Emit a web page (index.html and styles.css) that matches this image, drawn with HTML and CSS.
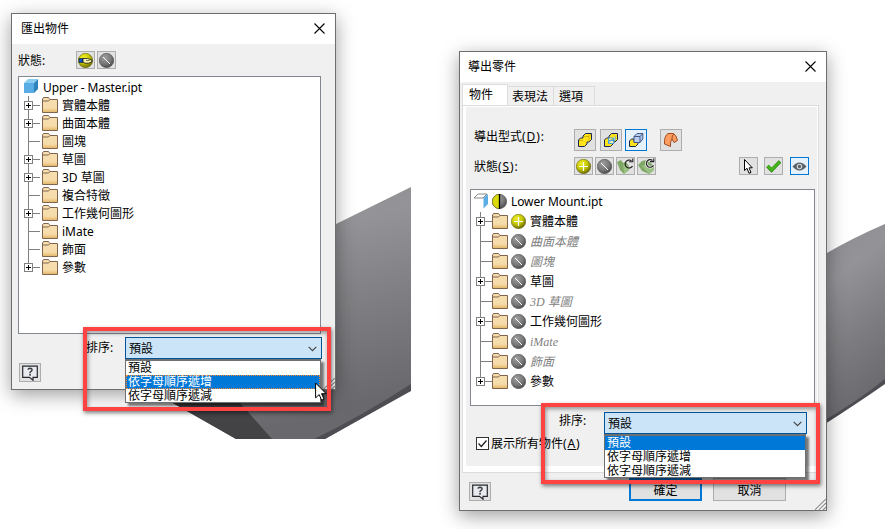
FILE: index.html
```html
<!DOCTYPE html>
<html lang="zh-Hant">
<head>
  <meta charset="UTF-8" />
  <meta name="viewport" content="width=device-width, initial-scale=1" />
  <title>匯出物件 / 導出零件</title>
  <link rel="stylesheet" href="styles.css">
</head>
<body>

  <!-- shared icons -->
  <svg class="defs" width="0" height="0">
    <defs>
      <linearGradient id="gFolder" x1="0" y1="0" x2="0" y2="1">
        <stop offset="0" stop-color="#f5deb0" /><stop offset=".7" stop-color="#f7dcab" /><stop offset="1" stop-color="#e2b366" />
      </linearGradient>
      <radialGradient id="gYellow" cx=".38" cy=".3" r=".75">
        <stop offset="0" stop-color="#eeee30" /><stop offset=".5" stop-color="#c9c900" /><stop offset="1" stop-color="#626200" />
      </radialGradient>
      <radialGradient id="gGray" cx=".38" cy=".3" r=".75">
        <stop offset="0" stop-color="#a0a0a0" /><stop offset=".6" stop-color="#777" /><stop offset="1" stop-color="#464646" />
      </radialGradient>
      <linearGradient id="gMetal" x1="0" y1="0" x2=".25" y2="1">
        <stop offset="0" stop-color="#8c8b90" /><stop offset=".3" stop-color="#949498" /><stop offset=".65" stop-color="#7d7c80" /><stop offset="1" stop-color="#69686c" />
      </linearGradient>
    </defs>
    <symbol id="branch" viewBox="0 0 16 20"><path d="M4.5 0V20M5 9.5H16" fill="none" stroke="#808080" /></symbol>
    <symbol id="branch-plus" viewBox="0 0 16 20">
      <path d="M4.5 0V20M5 9.5H16" fill="none" stroke="#808080" />
      <rect x=".5" y="5.5" width="8" height="8" fill="#fff" stroke="#808080" />
      <path d="M2 9.5H7M4.5 7V12" stroke="#000" />
    </symbol>
    <symbol id="branch-end" viewBox="0 0 16 20">
      <path d="M4.5 0V9.5H16" fill="none" stroke="#808080" />
      <rect x=".5" y="5.5" width="8" height="8" fill="#fff" stroke="#808080" />
      <path d="M2 9.5H7M4.5 7V12" stroke="#000" />
    </symbol>
    <symbol id="folder" viewBox="0 0 16 16">
      <path d="M.5 15.5V2L1.5 .5H6.5L8 2.5H15.5V15.5Z" fill="url(#gFolder)" stroke="#80654c" />
      <path d="M1 4H6.5L8 2.5" fill="none" stroke="#80654c" />
    </symbol>
    <symbol id="plus" viewBox="0 0 15 15">
      <circle cx="7.5" cy="7.5" r="7.2" fill="url(#gYellow)" stroke="#555500" stroke-width=".5" />
      <path d="M3 7.5H12M7.5 3V12" stroke="#fff" stroke-width="1.2" />
    </symbol>
    <symbol id="none" viewBox="0 0 15 15">
      <circle cx="7.5" cy="7.5" r="7.2" fill="url(#gGray)" stroke="#404040" stroke-width=".5" />
      <path d="M4 4L11 11" stroke="#fff" />
    </symbol>
    <symbol id="hand" viewBox="0 0 15 15">
      <circle cx="7.5" cy="7.5" r="7.2" fill="url(#gYellow)" stroke="#555500" stroke-width=".5" />
      <rect x="1" y="5.5" width="4" height="4" fill="#0a50c8" stroke="#111" stroke-width=".5" />
      <path d="M5 5.5H9.5L14 7.2L13.5 9L10.5 10.2H7L5 9.2Z" fill="#fbf5b0" stroke="#111" stroke-width=".8" />
      <path d="M8 7.5H11.5" stroke="#222" stroke-width=".6" />
    </symbol>
    <symbol id="help" viewBox="0 0 16 16">
      <path d="M.7 1.2H15.3V12.3H11V15.2L7.5 12.3H.7Z" fill="#e9eaf0" stroke="#26292e" stroke-width="1.2" />
      <path d="M6 4.6Q6.3 3.2 8 3.2Q10.2 3.3 10 5Q9.9 6 8.8 6.6Q8 7 8 8.2" fill="none" stroke="#3a3d42" stroke-width="1.5" />
      <rect x="7.2" y="9" width="1.7" height="1.6" fill="#3a3d42" />
    </symbol>
    <symbol id="close" viewBox="0 0 11 11"><path d="M.5 .5L10.5 10.5M10.5 .5L.5 10.5" stroke="#000" stroke-width="1.1" /></symbol>
    <symbol id="chevron" viewBox="0 0 9 6"><path d="M.7 .8L4.5 4.6L8.3 .8" fill="none" stroke="#444" stroke-width="1.2" /></symbol>
    <symbol id="grip" viewBox="0 0 11 11">
      <path d="M0 11L11 0M4 11L11 4M8 11L11 8" stroke="#929292" stroke-width="1.3" />
      <path d="M1.5 11L11 1.5M5.5 11L11 5.5" stroke="#fff" />
    </symbol>
    <symbol id="pointer" viewBox="0 0 12 20">
      <path d="M.6 1V15.8L4.2 12.6L6.6 18.2L9 17.1L6.6 11.7H11.2Z" fill="#fff" stroke="#000" />
    </symbol>
    <symbol id="recycle" viewBox="0 0 17 16">
      <path d="M0 4L4 2L6 5L9 4L12 8V12L7 16L3 12Z" fill="#7fa765" />
      <path d="M6 6L12 8V12L7 16Z" fill="#9ac084" />
      <path d="M15.5 8.2A4 4 0 1 1 14.5 2.8" fill="none" stroke="#222" stroke-width="1.2" />
      <path d="M12 3.8H15.8V.6" fill="none" stroke="#222" stroke-width="1.1" />
    </symbol>
    <symbol id="recycle-all" viewBox="0 0 17 16">
      <path d="M0 7L4 3L9 2L16 8V12L11 16L4 13Z" fill="#7fa765" />
      <path d="M4 8L9 6L16 10V12L11 16Z" fill="#9ac084" />
      <path d="M15.5 7.4A3.8 3.8 0 1 1 14.5 2.4" fill="none" stroke="#f4f4f4" stroke-width="2.6" />
      <path d="M15.5 7.4A3.8 3.8 0 1 1 14.5 2.4" fill="none" stroke="#222" stroke-width="1.2" />
      <path d="M12 3.6H15.8V.4" fill="none" stroke="#222" stroke-width="1.1" />
    </symbol>
  </svg>

  <!-- grey parts lying behind the dialogs -->
  <svg class="backdrop" width="885" height="529">
    <path d="M171 402V300L336 224L411 187V390L325 439H236Z" fill="url(#gMetal)" />
    <path d="M171 402V370H230L240 403L272 439H236Z" fill="#434346" />
    <path d="M411 384V391L325 439H314Q362 416 411 384Z" fill="#4e4d54" />
    <path d="M820 257Q852 238 885 224V382Q858 403 820 427Z" fill="url(#gMetal)" />
    <path d="M885 379V384Q858 403 820 427V423Q858 401 885 379Z" fill="#4e4d54" />
  </svg>

  <div class="dialog export">
    <div class="titlebar"><span>匯出物件</span><svg class="close"><use href="#close" /></svg></div>
    <div class="status-row">
      <label>狀態<span class="latin">:</span></label>
      <button class="tool"><svg><use href="#hand" /></svg></button>
      <button class="tool"><svg><use href="#none" /></svg></button>
    </div>
    <ul class="tree">
      <li class="root">
        <svg width="16" height="16"><path d="M1 5L5 1H15L11 5Z" fill="#8accf2" /><path d="M11 5L15 1V11L11 15Z" fill="#2f83bd" /><path d="M1 5H11V15H1Z" fill="#5aade4" /></svg>
        <span>Upper - Master.ipt</span>
      </li>
      <li><svg class="branch"><use href="#branch-plus" /></svg><svg class="folder"><use href="#folder" /></svg><span>實體本體</span></li>
      <li><svg class="branch"><use href="#branch-plus" /></svg><svg class="folder"><use href="#folder" /></svg><span>曲面本體</span></li>
      <li><svg class="branch"><use href="#branch" /></svg><svg class="folder"><use href="#folder" /></svg><span>圖塊</span></li>
      <li><svg class="branch"><use href="#branch-plus" /></svg><svg class="folder"><use href="#folder" /></svg><span>草圖</span></li>
      <li><svg class="branch"><use href="#branch-plus" /></svg><svg class="folder"><use href="#folder" /></svg><span>3D 草圖</span></li>
      <li><svg class="branch"><use href="#branch" /></svg><svg class="folder"><use href="#folder" /></svg><span>複合特徵</span></li>
      <li><svg class="branch"><use href="#branch-plus" /></svg><svg class="folder"><use href="#folder" /></svg><span>工作幾何圖形</span></li>
      <li><svg class="branch"><use href="#branch" /></svg><svg class="folder"><use href="#folder" /></svg><span>iMate</span></li>
      <li><svg class="branch"><use href="#branch" /></svg><svg class="folder"><use href="#folder" /></svg><span>飾面</span></li>
      <li><svg class="branch"><use href="#branch-end" /></svg><svg class="folder"><use href="#folder" /></svg><span>參數</span></li>
    </ul>
    <div class="sort-row">
      <label>排序<span class="latin">:</span></label>
      <div class="combo">
        <span>預設</span><svg class="chevron"><use href="#chevron" /></svg>
        <ul class="options">
          <li>預設</li>
          <li class="selected focus">依字母順序遞增</li>
          <li>依字母順序遞減</li>
        </ul>
      </div>
    </div>
    <div class="footer">
      <button class="help"><svg><use href="#help" /></svg></button>
      <svg class="grip"><use href="#grip" /></svg>
    </div>
  </div>

  <div class="dialog derive">
    <div class="titlebar"><span>導出零件</span><svg class="close"><use href="#close" /></svg></div>
    <div class="tabs">
      <div class="tab active">物件</div>
      <div class="tab">表現法</div>
      <div class="tab">選項</div>
    </div>
    <div class="panel">
      <div class="type-row">
        <label>導出型式<span class="latin">(<u>D</u>):</span></label>
        <button class="tool big"><svg viewBox="0 0 16 16"><path d="M1.5 8L3.5 6H6V4L8.5 1.5H14.5V7.5L12 10H10V12L7.5 14.5H1.5Z" fill="#ffe21a" stroke="#17264f" /><path d="M6.5 4.5H12L14 2M12 4.5V9.5M2 8.5H6" fill="none" stroke="#c9a800" stroke-width=".8" /></svg></button>
        <button class="tool big"><svg viewBox="0 0 16 16"><path d="M1.5 8L3.5 6H6V4L8.5 1.5H14.5V7.5L12 10H10V12L7.5 14.5H1.5Z" fill="#ffe21a" stroke="#17264f" /><path d="M5.5 6H10.5V11.5H5.5ZM5.5 11L10 6.5M6 8.5H12V4.5" fill="#fff6b0" stroke="#3a9be0" stroke-width=".9" /></svg></button>
        <button class="tool big on"><svg viewBox="0 0 16 16"><path d="M1.5 9L3.5 7H6V10H10V12L7.5 14.5H1.5Z" fill="#ffe21a" stroke="#17264f" /><path d="M6 4.5L9 1.5H14.8V7L12 10.5H6Z" fill="#b9cdef" stroke="#40588a" /><path d="M6 4.5H12V10.5M12 4.5L14.8 1.5" fill="none" stroke="#40588a" /></svg></button>
        <button class="tool big surface"><svg viewBox="0 0 16 16"><path d="M1.5 12Q1 4 5 1.5H10.5Q13 2.5 14.5 8.5L11 10.5L9 7Q7 9 7.5 14.5Z" fill="#fb9d63" stroke="#a34b1e" /><path d="M9 7Q8.5 3.5 11 2" fill="none" stroke="#a34b1e" /></svg></button>
      </div>
      <div class="status-row">
        <label>狀態<span class="latin">(<u>S</u>):</span></label>
        <button class="tool"><svg><use href="#plus" /></svg></button>
        <button class="tool"><svg><use href="#none" /></svg></button>
        <button class="tool wide"><svg><use href="#recycle" /></svg></button>
        <button class="tool wide"><svg><use href="#recycle-all" /></svg></button>
        <button class="tool pick"><svg viewBox="0 0 15 15"><path d="M3.5 .5V11.5L6 9.3L8 14.3L10 13.4L8 8.8H11.3Z" fill="#fff" stroke="#000" /></svg></button>
        <button class="tool check"><svg viewBox="0 0 15 15"><path d="M1.5 7L5.5 11.2L14 2.5" fill="none" stroke="#287d10" stroke-width="3.6" /><path d="M1.8 7.2L5.5 11L13.6 2.8" fill="none" stroke="#44b61a" stroke-width="2.6" /></svg></button>
        <button class="tool on eye"><svg viewBox="0 0 15 15"><path d="M.5 7.5Q7.5 -.5 14.5 7.5Q7.5 15.5 .5 7.5Z" fill="#5b6065" /><circle cx="7.5" cy="7.5" r="2.2" fill="none" stroke="#d5dade" stroke-width="1.1" /></svg></button>
      </div>
      <ul class="tree">
        <li class="root">
          <svg width="16" height="16"><path d="M1 5L5 1H14L10 5Z" fill="#fff" stroke="#888" /><path d="M10.5 5L15 1V11L10.5 15.5Z" fill="#5aade4" /></svg>
          <svg width="15" height="15"><circle cx="7.5" cy="7.5" r="7.2" fill="url(#gGray)" stroke="#404040" stroke-width=".5" /><path d="M7.5 .3A7.2 7.2 0 0 0 7.5 14.7Z" fill="#dada0c" stroke="#555500" stroke-width=".5" /><path d="M7.5 0V15" stroke="#000" stroke-width="1.3" /></svg>
          <span>Lower Mount.ipt</span>
        </li>
        <li><svg class="branch"><use href="#branch-plus" /></svg><svg class="folder"><use href="#folder" /></svg><svg class="state"><use href="#plus" /></svg><span>實體本體</span></li>
        <li class="off"><svg class="branch"><use href="#branch" /></svg><svg class="folder"><use href="#folder" /></svg><svg class="state"><use href="#none" /></svg><span>曲面本體</span></li>
        <li class="off"><svg class="branch"><use href="#branch" /></svg><svg class="folder"><use href="#folder" /></svg><svg class="state"><use href="#none" /></svg><span>圖塊</span></li>
        <li><svg class="branch"><use href="#branch-plus" /></svg><svg class="folder"><use href="#folder" /></svg><svg class="state"><use href="#none" /></svg><span>草圖</span></li>
        <li class="off"><svg class="branch"><use href="#branch" /></svg><svg class="folder"><use href="#folder" /></svg><svg class="state"><use href="#none" /></svg><span>3D 草圖</span></li>
        <li><svg class="branch"><use href="#branch-plus" /></svg><svg class="folder"><use href="#folder" /></svg><svg class="state"><use href="#none" /></svg><span>工作幾何圖形</span></li>
        <li class="off"><svg class="branch"><use href="#branch" /></svg><svg class="folder"><use href="#folder" /></svg><svg class="state"><use href="#none" /></svg><span>iMate</span></li>
        <li class="off"><svg class="branch"><use href="#branch" /></svg><svg class="folder"><use href="#folder" /></svg><svg class="state"><use href="#none" /></svg><span>飾面</span></li>
        <li><svg class="branch"><use href="#branch-end" /></svg><svg class="folder"><use href="#folder" /></svg><svg class="state"><use href="#none" /></svg><span>參數</span></li>
      </ul>
      <div class="sort-row">
        <label>排序<span class="latin">:</span></label>
        <div class="combo">
          <span>預設</span><svg class="chevron"><use href="#chevron" /></svg>
          <ul class="options">
            <li class="selected">預設</li>
            <li>依字母順序遞增</li>
            <li>依字母順序遞減</li>
          </ul>
        </div>
      </div>
      <div class="show-all">
        <svg width="13" height="13"><rect x=".5" y=".5" width="12" height="12" fill="#fff" stroke="#333" /><path d="M2.5 6.5L5.3 9.5L10.5 3.5" fill="none" stroke="#222" stroke-width="1.3" /></svg>
        <span>展示所有物件<span class="latin">(<u>A</u>)</span></span>
      </div>
    </div>
    <div class="footer">
      <button class="help"><svg><use href="#help" /></svg></button>
      <button class="push default">確定</button>
      <button class="push">取消</button>
      <svg class="grip"><use href="#grip" /></svg>
    </div>
  </div>

  <div class="callout first"></div>
  <div class="callout second"></div>
  <svg class="pointer"><use href="#pointer" /></svg>

</body>
</html>
```
FILE: styles.css
```css
* { box-sizing: border-box; }
body {
  margin: 0; width: 885px; height: 529px; overflow: hidden; position: relative;
  background: #fff; color: #000;
  font: 12px/16px "Noto Sans", "Noto Sans CJK TC", sans-serif;
}
ul { list-style: none; margin: 0; padding: 0; }
svg { display: block; flex: none; }
button { padding: 0; font: inherit; color: inherit; }
label, span { white-space: nowrap; }
.latin { letter-spacing: .9px; }
.defs, .backdrop { position: absolute; left: 0; top: 0; }

/* windows */
.dialog {
  position: absolute; z-index: 0; display: flex; flex-direction: column;
  background: #f0f0f0; border: 1px solid #6e6e6e;
  box-shadow: 0 5px 18px rgba(0, 0, 0, .38);
}
.export { left: 11px; top: 13px; width: 325px; height: 377px; }
.derive { left: 459px; top: 51px; width: 368px; height: 460px; }
.titlebar {
  display: flex; justify-content: space-between; align-items: center; flex: none;
  height: 30px; padding: 0 10px 0 9px; background: #fff;
}
.derive .titlebar { padding-left: 8px; }
.close { width: 11px; height: 11px; margin-top: -2px; }

/* tool buttons */
.tool {
  display: flex; align-items: center; justify-content: center; flex: none;
  width: 19px; height: 18px; background: #e1e1e1; border: 1px solid #adadad;
}
.tool svg { width: 15px; height: 15px; }
.tool.wide svg { width: 17px; height: 16px; }
.tool.big { width: 22px; height: 22px; }
.tool.big svg { width: 16px; height: 16px; }
.tool.on { background: #e5f1fb; border-color: #0078d7; }
.status-row { display: flex; align-items: center; gap: 2px; height: 18px; flex: none; }
.status-row label { line-height: 18px; padding-top: 2px; }

/* tree */
.tree { flex: none; background: #fff; border: 1px solid #828790; padding: 1px 0 0 5px; }
.tree li { display: flex; height: 18px; }
.tree span { line-height: 18px; }
.tree .root span { letter-spacing: -.1px; }
.branch { width: 16px; height: 20px; }
.folder { width: 16px; height: 16px; }
.state { width: 15px; height: 15px; }

/* combo box */
.sort-row { display: flex; flex: none; height: 22px; }
.combo {
  position: relative; display: flex; justify-content: space-between; align-items: center;
  height: 22px; padding: 2px 4px 0 3px; background: #cce4f7; border: 1px solid #005499;
}
.chevron { width: 9px; height: 6px; }
.options {
  position: absolute; z-index: 1; left: -1px; right: 0; top: 21px; height: 44px;
  background: #fff; border: 1px solid #707070; border-top-width: 2px;
  box-shadow: 3px 3px 2px rgba(0, 0, 0, .5);
}
.options li { height: 14px; line-height: 14px; padding-left: 2px; }
.options .selected { background: #0078d7; color: #fff; }
.options .focus { outline: 1px dotted #ff8728; outline-offset: -1px; }

.footer { display: flex; flex: 1; }
.help {
  display: flex; align-items: center; justify-content: center;
  width: 22px; height: 19px; background: #e1e1e1; border: 1px solid #adadad;
}
.help svg { width: 16px; height: 16px; }
.grip { width: 11px; height: 11px; align-self: flex-end; margin-left: auto; }

/* export dialog */
.export .status-row { margin-top: 7px; padding-left: 6px; }
.export .status-row label { width: 56px; }
.export .tree { width: 303px; height: 258px; margin: 7px 0 0 6px; }
.export .tree .root { height: 19px; gap: 3px; margin-left: -1px; }
.export .tree .root span { line-height: 19px; }
.export .tree .root span { margin-left: 1px; }
.export .branch { margin: -1px 2px 0 0; }
.export .folder { margin-right: 4px; }
.export .sort-row { margin-top: 3px; padding-left: 74px; }
.export .sort-row label { width: 39px; line-height: 22px; }
.export .combo { width: 197px; }
.export .footer { padding: 4px 0 0 7px; }

/* derive dialog */
.tabs { display: flex; align-items: flex-end; flex: none; height: 24px; padding: 2px 0 0 2px; margin-bottom: -1px; }
.tab {
  height: 20px; line-height: 20px; padding: 0 4px; margin-left: -1px;
  border: 1px solid #dcdcdc; width: 42px;
}
.tab + .tab + .tab { padding-left: 5px; }
.tab:nth-child(2) { width: 47px; }
.tab.active { width: 46px; height: 22px; padding-left: 6px; margin-left: 0; background: #fff; border-bottom: 0; }
.panel {
  flex: none; width: 357px; height: 368px; margin-left: 2px;
  border: 1px solid #dcdcdc;
  box-shadow: inset 3px 1px #fff, inset -1px -6px #fff;
}
.type-row { display: flex; height: 22px; margin-top: 23px; padding-left: 11px; }
.type-row label { width: 100px; line-height: 16px; }
.type-row .tool + .tool { margin-left: 4px; }
.type-row .tool.on { margin-left: 3px; }
.type-row .tool.surface { margin-left: 13px; }
.derive .status-row { margin-top: 6px; padding-left: 11px; }
.derive .status-row label { width: 98px; }
.pick { margin-left: auto; }
.check { margin-left: 4px; }
.eye { margin: 0 9px 0 5px; }
.derive .tree { width: 345px; height: 217px; margin: 14px 0 0 7px; }
.derive .tree li { height: 20px; }
.derive .tree span { line-height: 20px; }
.derive .tree .root { height: 21px; gap: 3px; padding-top: 2px; margin-left: -3px; }
.derive .tree .root svg + svg { margin-top: 1px; }
.derive .tree .root span { line-height: 17px; margin-left: 1px; }
.derive .folder { margin-top: 1px; }
.derive .state { margin: 2px 4px 0 3px; }
.tree .off { color: #808080; font-family: "Liberation Serif", "Noto Sans CJK TC", serif; font-style: italic; }
.derive .sort-row { margin-top: 6px; padding-left: 96px; }
.derive .sort-row label { width: 45px; line-height: 17px; }
.derive .combo { width: 203px; }
.show-all { display: flex; align-items: center; gap: 2px; height: 13px; margin: 3px 0 0 13px; }
.derive .footer { padding-left: 9px; }
.derive .help { margin-top: 9px; }
.push { width: 73px; height: 23px; padding-top: 3px; margin-top: 5px; background: #e1e1e1; border: 1px solid #adadad; }
.push.default { margin: 5px 11px 0 138px; border: 2px solid #0078d7; }

/* highlight frames over the sort boxes */
.callout { position: absolute; border: 4px solid #ff4343; box-shadow: 1px 2px 4px rgba(0, 0, 0, .5), inset 1px 2px 4px rgba(0, 0, 0, .4); }
.callout.first { left: 83px; top: 327px; width: 248px; height: 84px; }
.callout.second { left: 541px; top: 403px; width: 279px; height: 81px; }
.pointer { position: absolute; left: 315px; top: 382px; width: 12px; height: 20px; }
```
